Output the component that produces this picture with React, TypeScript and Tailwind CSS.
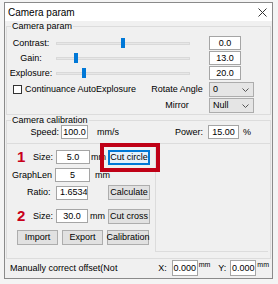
import React from 'react';

const sliders = [
  { label: 'Contrast:', pos: 65, value: '0.0' },
  { label: 'Gain:', pos: 18, value: '13.0' },
  { label: 'Explosure:', pos: 26, value: '20.0' },
];

function Box({ w, children, h = 'h-[14px]' }: { w: string; children: React.ReactNode; h?: string }) {
  return (
    <div className={`${w} ${h} shrink-0 border border-[#a5a5a5] bg-white flex items-center justify-center overflow-hidden whitespace-nowrap`}>
      {children}
    </div>
  );
}

function Btn({ w, children, focus = false }: { w: string; children: React.ReactNode; focus?: boolean }) {
  return (
    <div
      className={`${w} h-[15px] shrink-0 flex items-center justify-center whitespace-nowrap border ${
        focus ? 'border-[#0078d7] bg-[#e5f1fb] shadow-[inset_0_0_0_1px_#0078d7]' : 'border-[#adadad] bg-[#e1e1e1]'
      }`}
    >
      {children}
    </div>
  );
}

function Combo({ value }: { value: string }) {
  return (
    <div className="w-[45px] h-[15px] shrink-0 border border-[#acacac] bg-[#e5e5e5] flex items-center justify-between pl-[3px] pr-[4px]">
      <span>{value}</span>
      <svg width="7" height="4" viewBox="0 0 7 4">
        <path d="M0.5 0.5 L3.5 3.5 L6.5 0.5" fill="none" stroke="#555" strokeWidth="1" />
      </svg>
    </div>
  );
}

export default function App() {
  return (
    <div className="w-[278px] h-[284px] bg-[#f4f4f4] pt-[2px] pl-[4px] font-['Liberation_Sans',Arial,sans-serif] text-[9px] leading-[11px] text-black">
      <div className="w-[269px] h-[277px] border border-[#8a8a8a] bg-[#f0f0f0] flex flex-col">
        {/* title bar */}
        <div className="h-[18px] bg-white flex items-center justify-between pl-[3px] pr-[5px] text-[10px]">
          <span>Camera param</span>
          <svg width="9" height="9" viewBox="0 0 9 9">
            <path d="M0.5 0.5 L8.5 8.5 M8.5 0.5 L0.5 8.5" stroke="#333" strokeWidth="1" />
          </svg>
        </div>

        {/* Camera param group */}
        <fieldset className="mx-[1px] border border-[#dcdcdc] px-0 pb-[1px]">
          <legend className="ml-[4px] px-[1px] leading-[10px]">Camera param</legend>
          <div className="flex flex-col gap-[1px] pt-[5px]">
            {sliders.map((s) => (
              <div key={s.label} className="flex items-center h-[14px]">
                <div className="w-[48px] text-center">{s.label}</div>
                <div className="relative ml-[1px] w-[134px] h-[10px] flex items-center">
                  <div className="w-full h-[3px] bg-[#e7e7e7] border border-[#d9d9d9]" />
                  <div className="absolute top-0 w-[4px] h-[10px] bg-[#0078d7]" style={{ left: s.pos }} />
                </div>
                <div className="ml-[19px]">
                  <Box w="w-[32px]">{s.value}</Box>
                </div>
              </div>
            ))}
            <div className="flex items-center h-[15px] mt-[1px]">
              <div className="ml-[6px] w-[9px] h-[9px] border border-[#333] bg-white" />
              <span className="ml-[3px] whitespace-nowrap">Continuance AutoExplosure</span>
              <div className="ml-auto w-[60px] text-center whitespace-nowrap">Rotate Angle</div>
              <div className="ml-[2px] mr-[16px]">
                <Combo value="0" />
              </div>
            </div>
            <div className="flex items-center h-[15px]">
              <div className="ml-auto w-[60px] text-center">Mirror</div>
              <div className="ml-[2px] mr-[16px]">
                <Combo value="Null" />
              </div>
            </div>
          </div>
        </fieldset>

        {/* Camera calibration group */}
        <fieldset className="mx-[1px] border border-[#dcdcdc] px-0 pb-0">
          <legend className="ml-[4px] px-[1px] leading-[10px]">Camera calibration</legend>
          <div className="flex items-center h-[14px]">
            <div className="w-[52px] text-right">Speed:</div>
            <div className="ml-[2px]">
              <Box w="w-[27px]">100.0</Box>
            </div>
            <span className="ml-[9px]">mm/s</span>
            <div className="ml-auto text-right">Power:</div>
            <div className="ml-[5px]">
              <Box w="w-[31px]">15.00</Box>
            </div>
            <span className="ml-[4px] mr-[19px]">%</span>
          </div>

          <div className="flex mt-[4px] border-t border-[#dcdcdc]">
            <div className="w-[149px] h-[108px] border-r border-[#dcdcdc] flex flex-col">
              <div className="flex items-center h-[14px] mt-[6px]">
                <span className="ml-[10px] w-[16px] text-[15px] leading-[14px] font-bold text-[#c8001a]">1</span>
                <span className="w-[23px]">Size:</span>
                <Box w="w-[34px]">5.0</Box>
                <span className="ml-[1px] w-[17px] overflow-hidden">mm</span>
                <div className="relative">
                  <Btn w="w-[42px]" focus>
                    Cut circle
                  </Btn>
                  <div className="absolute -left-[8px] -right-[10px] -top-[7px] -bottom-[7px] border-[4px] border-[#bf0016]" />
                </div>
              </div>
              <div className="flex items-center h-[14px] mt-[4px]">
                <span className="ml-[5px] w-[43px]">GraphLen</span>
                <Box w="w-[35px]">5</Box>
                <span className="ml-[5px]">mm</span>
              </div>
              <div className="flex items-center h-[15px] mt-[3px]">
                <span className="ml-[20px] w-[29px]">Ratio:</span>
                <Box w="w-[32px]">
                  <span className="w-full pl-[3px] overflow-hidden">1.65349</span>
                </Box>
                <div className="ml-[20px]">
                  <Btn w="w-[42px]">Calculate</Btn>
                </div>
              </div>
              <div className="flex items-center h-[16px] mt-[8px]">
                <span className="ml-[10px] w-[16px] text-[15px] leading-[14px] font-bold text-[#c8001a]">2</span>
                <span className="w-[23px]">Size:</span>
                <Box w="w-[32px]">30.0</Box>
                <span className="ml-[2px] w-[18px]">mm</span>
                <Btn w="w-[42px]">Cut cross</Btn>
              </div>
              <div className="flex items-center gap-[4px] h-[15px] mt-[6px] ml-[10px]">
                <Btn w="w-[41px]">Import</Btn>
                <Btn w="w-[41px]">Export</Btn>
                <Btn w="w-[42px]">Calibration</Btn>
              </div>
            </div>
            <div className="flex-1 h-[108px] border-b border-[#dcdcdc] mr-[2px]" />
          </div>
          <div className="h-[6px]" />
        </fieldset>

        {/* bottom row */}
        <div className="flex items-center h-[16px] mt-[1px]">
          <span className="ml-[5px]">Manually correct offset(Not</span>
          <span className="ml-auto">X:</span>
          <div className="ml-[5px]">
            <Box w="w-[26px]" h="h-[16px]">0.000</Box>
          </div>
          <span className="ml-[1px] self-start text-[7px] leading-[9px]">mm</span>
          <span className="ml-[8px]">Y:</span>
          <div className="ml-[4px]">
            <Box w="w-[26px]" h="h-[16px]">0.000</Box>
          </div>
          <span className="ml-[1px] mr-[3px] self-start text-[7px] leading-[9px]">mm</span>
        </div>
      </div>
    </div>
  );
}
